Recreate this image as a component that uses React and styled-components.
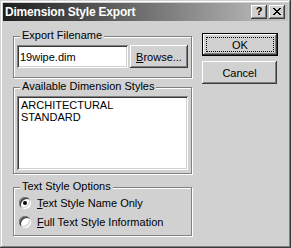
import styled, { createGlobalStyle } from "styled-components";

const GlobalStyle = createGlobalStyle`
  html, body {
    margin: 0;
    padding: 0;
    background: #d1d1d1;
  }
  * {
    box-sizing: border-box;
  }
`;

function App() {
  return (
    <>
      <GlobalStyle />
      <Window>
        <TitleBar>
          <Title>Dimension Style Export</Title>
          <CaptionButtons>
            <CaptionButton>?</CaptionButton>
            <CaptionButton>
              <svg width="8" height="7" viewBox="0 0 8 7">
                <path d="M0 0 L7 7 M1 0 L8 7 M7 0 L0 7 M8 0 L1 7" stroke="#000" strokeWidth="1" />
              </svg>
            </CaptionButton>
          </CaptionButtons>
        </TitleBar>

        <Client>
          <LeftColumn>
            <Group $top={15} $height={42}>
              <Legend>Export Filename</Legend>
              <Row>
                <TextBox value="19wipe.dim" readOnly />
                <Button $width={58}>
                  <u>B</u>rowse...
                </Button>
              </Row>
            </Group>

            <Group $top={9} $height={87}>
              <Legend>Available Dimension Styles</Legend>
              <ListBox>
                <ListItem>ARCHITECTURAL</ListItem>
                <ListItem>STANDARD</ListItem>
              </ListBox>
            </Group>

            <Group $top={13} $height={49}>
              <Legend>Text Style Options</Legend>
              <RadioList>
                <RadioRow>
                  <Radio $checked />
                  <span>
                    <u>T</u>ext Style Name Only
                  </span>
                </RadioRow>
                <RadioRow>
                  <Radio />
                  <span>
                    <u>F</u>ull Text Style Information
                  </span>
                </RadioRow>
              </RadioList>
            </Group>
          </LeftColumn>

          <RightColumn>
            <Button $default $width={76}>
              <Focus>OK</Focus>
            </Button>
            <Button $width={75}>Cancel</Button>
          </RightColumn>
        </Client>
      </Window>
    </>
  );
}

export default App;

const Window = styled.div`
  width: 291px;
  height: 248px;
  padding: 3px;
  background: #d1d1d1;
  box-shadow: inset -1px -1px 0 #3a3a3a, inset 1px 1px 0 #d1d1d1,
    inset -2px -2px 0 #808080, inset 2px 2px 0 #ffffff;
  display: flex;
  flex-direction: column;
  font-family: "Liberation Sans", Arial, sans-serif;
  font-size: 11px;
  color: #000;
`;

const TitleBar = styled.div`
  height: 18px;
  flex-shrink: 0;
  display: flex;
  align-items: center;
  justify-content: space-between;
  padding: 0 3px 0 2px;
  background: linear-gradient(to right, #1e1e1e, #c4c4c4);
`;

const Title = styled.div`
  color: #fff;
  font-weight: bold;
  font-size: 12px;
  letter-spacing: -0.2px;
`;

const CaptionButtons = styled.div`
  display: flex;
  gap: 2px;
`;

const CaptionButton = styled.div`
  width: 16px;
  height: 14px;
  background: #d1d1d1;
  box-shadow: inset -1px -1px 0 #3a3a3a, inset 1px 1px 0 #ffffff,
    inset -2px -2px 0 #808080;
  display: flex;
  align-items: center;
  justify-content: center;
  font-weight: bold;
  font-size: 11px;
  line-height: 1;
  padding-bottom: 1px;
`;

const Client = styled.div`
  display: flex;
  gap: 10px;
  padding: 0 10px;
`;

const LeftColumn = styled.div`
  width: 180px;
  display: flex;
  flex-direction: column;
`;

const RightColumn = styled.div`
  width: 76px;
  display: flex;
  flex-direction: column;
  align-items: flex-start;
  gap: 5px;
  padding-top: 12px;
`;

const Group = styled.div`
  position: relative;
  margin-top: ${(p) => p.$top}px;
  height: ${(p) => p.$height}px;
  border: 1px solid #808080;
  box-shadow: inset 1px 1px 0 #fff, 1px 1px 0 #fff;
  padding: 8px 3px 0 3px;
`;

const Legend = styled.div`
  position: absolute;
  top: -8px;
  left: 6px;
  padding: 0 2px;
  line-height: 13px;
  background: #d1d1d1;
`;

const Row = styled.div`
  display: flex;
  gap: 2px;
`;

const TextBox = styled.input`
  width: 111px;
  height: 23px;
  border: none;
  outline: none;
  padding: 0 3px;
  background: #fff;
  font: inherit;
  color: #000;
  box-shadow: inset 1px 1px 0 #808080, inset -1px -1px 0 #fff,
    inset 2px 2px 0 #3a3a3a, inset -2px -2px 0 #d1d1d1;
`;

const Button = styled.div`
  width: ${(p) => p.$width}px;
  height: 23px;
  display: flex;
  align-items: center;
  justify-content: center;
  background: #d1d1d1;
  padding: ${(p) => (p.$default ? "4px" : "0")};
  box-shadow: ${(p) =>
    p.$default
      ? "inset 0 0 0 1px #000, inset -2px -2px 0 #3a3a3a, inset 2px 2px 0 #fff, inset -3px -3px 0 #808080"
      : "inset -1px -1px 0 #3a3a3a, inset 1px 1px 0 #fff, inset -2px -2px 0 #808080"};
`;

const Focus = styled.div`
  width: 100%;
  height: 100%;
  border: 1px dotted #000;
  display: flex;
  align-items: center;
  justify-content: center;
`;

const ListBox = styled.div`
  width: 171px;
  height: 74px;
  background: #fff;
  padding: 3px 4px;
  box-shadow: inset 1px 1px 0 #808080, inset -1px -1px 0 #fff,
    inset 2px 2px 0 #3a3a3a, inset -2px -2px 0 #d1d1d1;
`;

const ListItem = styled.div`
  line-height: 12px;
`;

const RadioList = styled.div`
  display: flex;
  flex-direction: column;
  gap: 3px;
  margin-top: -1px;
  padding-left: 2px;
`;

const RadioRow = styled.div`
  display: flex;
  align-items: center;
  gap: 6px;
  height: 16px;
`;

const Radio = styled.div`
  width: 12px;
  height: 12px;
  border-radius: 50%;
  background: #fff;
  position: relative;
  box-shadow: inset 1px 1px 0 #808080, inset -1px -1px 0 #fff,
    inset 2px 2px 0 #3a3a3a, inset -2px -2px 0 #d1d1d1;
  &::after {
    content: "";
    display: ${(p) => (p.$checked ? "block" : "none")};
    position: absolute;
    left: 4px;
    top: 4px;
    width: 4px;
    height: 4px;
    border-radius: 50%;
    background: #000;
  }
`;
